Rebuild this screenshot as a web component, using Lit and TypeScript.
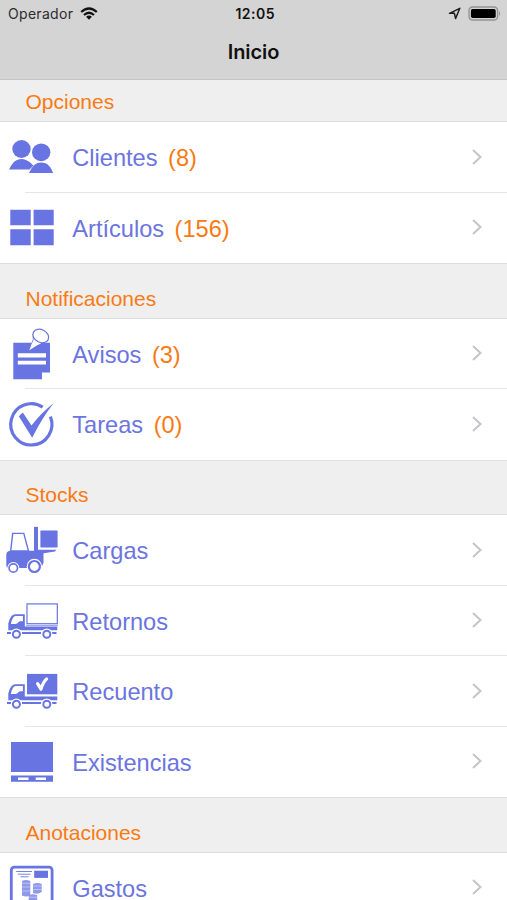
import { LitElement, html, svg, css, nothing } from "lit";
import { customElement, property } from "lit/decorators.js";

const truck = (loaded: boolean) => svg`
  <rect class=${loaded ? "f" : "o"} stroke-width="1.2" x="27" y="17.9" width="30.3" height=${loaded ? 20.4 : 19.8} />
  ${loaded
    ? svg`<path class="cut" stroke-width="3.2" stroke-linecap="round" stroke-linejoin="round" d="M37.6 27.6L41 33.2Q42.8 26.5 46.6 22.9"/>`
    : svg`<path class="o" stroke-width=".7" d="M26 39.4H58"/>`}
  <path class="f" fill-rule="evenodd" d="M8.3 44.8V37.5Q9 33 11.6 30Q13 28.2 15.2 28.2H24.8V40.4H57.3V44.2H8.3Z M10.9 37.9H15.6Q17.2 37.8 18.4 36.2Q19.3 35.2 20.6 35.2H22.9V30H15.5Q14 30 13 31.8Q11.5 34.5 10.9 37.9Z"/>
  <path class="o" stroke-width="1.8" d="M7 47H11 M22 47H41 M52 47H56.5"/>
  ${[16.4, 46.8].map(
    (x) => svg`<circle class="w" cx=${x} cy="48" r="5.6"/><circle class="o" stroke-width="2" cx=${x} cy="48.2" r="3.5"/>`
  )}`;

const icons: Record<string, unknown> = {
  clients: svg`
    <ellipse class="f" cx="21.5" cy="27" rx="9.2" ry="8.9"/>
    <ellipse class="f" cx="41.2" cy="30.3" rx="9.2" ry="8.9"/>
    <path class="f" d="M9 47.6Q12.5 39.7 17 37.9Q21.5 36.3 26 37.9Q30.5 39.7 33.4 43.4L29.6 47.6Z"/>
    <path class="f" d="M29 51Q32.5 43.3 37 41.3Q41.2 39.9 45.5 41.3Q50 43.3 53.2 51Z"/>`,
  items: svg`<path class="f" d="M10.3 16.7H30.7V32.3H10.3Z M33.6 16.7H53.7V32.3H33.6Z M10.3 36.3H30.7V52.3H10.3Z M33.6 36.3H53.7V52.3H33.6Z"/>`,
  notices: svg`
    <path class="f" d="M13.3 23.8H50V53.6H42V60.2H13.3Z"/>
    <path class="w" d="M17.8 34.2H46V38.5H17.8Z M17.8 41.8H46V45.5H17.8Z"/>
    <path class="w" d="M29.3 31.2L32.7 22L33 15L41 24.6L37.2 26.3Z"/>
    <path class="o" stroke-width=".8" d="M31.9 23.8L33.3 20.5L32.9 15"/>
    <ellipse class="p" stroke-width="1.2" cx="40.8" cy="17" rx="8.3" ry="6.3" transform="rotate(28 40.8 17)"/>`,
  tasks: svg`
    <path class="o" stroke-width="3.2" d="M42.7 18.2A20.6 20.6 0 1 0 50.4 27.6"/>
    <path class="f" d="M18.8 27.2L22.8 23.6L31.5 36.6Q41 24 53.6 14.3Q42 29 32.2 48.8Z"/>`,
  loads: svg`
    <path class="f" d="M34 11.8H38V36H34Z"/>
    <rect class="f" x="40.4" y="15.4" width="17.2" height="17.2" rx=".8"/>
    <path class="f" d="M38 34.8H56.3L55 36.4L43.5 38.2V48L41 53H8.5Q6.3 53 6.3 50V39.5Q6.5 36.5 10 35.8H34V34.8Z"/>
    <path class="p" stroke-width="1.4" d="M12.7 18.4H23.8L28.4 35.9H10.7Z"/>
    <circle class="w" cx="13.3" cy="53" r="6"/><circle class="o" stroke-width="1.7" cx="13.3" cy="53" r="4.2"/>
    <circle class="w" cx="34.4" cy="51.5" r="7.7"/><circle class="o" stroke-width="2.2" cx="34.4" cy="51.5" r="5.5"/>`,
  returns: truck(false),
  recount: truck(true),
  stock: svg`
    <path class="f" d="M11 15H53V45H11Z M11 48.5H53V54.7H11Z"/>
    <path class="w" d="M18 50.6H28.5V53H18Z M35.7 50.6H46V53H35.7Z"/>`,
  expenses: svg`
    <rect class="o" stroke-width="2.8" x="11.3" y="14.2" width="40.8" height="58" rx="3"/>
    <path class="f" d="M34.2 17.7H48V24.9H34.2Z"/>
    <path class="o" stroke-width=".9" d="M16.2 18.5H32 M18 21.2H30.5 M20.5 23.8H28.5"/>
    <g class="soft"><path d="M22 28Q26 26 30.3 28V42.5Q26 44.5 22 42.5Z M33 31Q37.5 29 41.7 31V39Q37.5 42 33 40Z M28.7 42.3Q33 40.3 37.2 42.3V49H28.7Z"/></g>
    <path class="cut" stroke-width=".4" d="M22 30.3H30.3 M22 34H30.3 M22 38H30.3 M33 33H41.7 M33 36.5H41.7 M28.7 44.2H37.2"/>`,
};

interface Entry {
  icon: string;
  label: string;
  count?: number;
}

const sections: { title: string; entries: Entry[] }[] = [
  {
    title: "Opciones",
    entries: [
      { icon: "clients", label: "Clientes", count: 8 },
      { icon: "items", label: "Artículos", count: 156 },
    ],
  },
  {
    title: "Notificaciones",
    entries: [
      { icon: "notices", label: "Avisos", count: 3 },
      { icon: "tasks", label: "Tareas", count: 0 },
    ],
  },
  {
    title: "Stocks",
    entries: [
      { icon: "loads", label: "Cargas" },
      { icon: "returns", label: "Retornos" },
      { icon: "recount", label: "Recuento" },
      { icon: "stock", label: "Existencias" },
    ],
  },
  { title: "Anotaciones", entries: [{ icon: "expenses", label: "Gastos" }] },
];

@customElement("menu-row")
class MenuRow extends LitElement {
  @property({ attribute: false }) entry!: Entry;

  static styles = css`
    :host { display: flex; height: 70.56px; background: #fff; color: #6b74df; }
    .icon { width: 60px; height: 70px; flex: none; }
    .f { fill: #6874e2; }
    .o { fill: none; stroke: #6874e2; }
    .p { fill: #fff; stroke: #6874e2; }
    .w { fill: #fff; }
    .cut { fill: none; stroke: #fff; }
    .soft { fill: #8f98e9; }
    .body { flex: 1; display: flex; align-items: center; padding: 2px 24px 0 12.3px; font-size: 23.6px; line-height: 20px; }
    .count { color: #f97a12; margin-left: 10.5px; }
    .arrow { margin-left: auto; width: 12px; height: 18px; margin-bottom: 3px; fill: none; stroke: #c5c5c9; stroke-width: 2; }
  `;

  render() {
    const { icon, label, count } = this.entry;
    return html`
      <svg class="icon" viewBox="0 0 60 70">${icons[icon]}</svg>
      <div class="body">
        <span>${label}</span>
        ${count === undefined ? nothing : html`<span class="count">(${count})</span>`}
        <svg class="arrow" viewBox="0 0 12 18"><path d="M2 2L9.5 9L2 16" /></svg>
      </div>
    `;
  }
}

@customElement("app-root")
class AppRoot extends LitElement {
  static styles = css`
    :host { display: block; height: 900px; overflow: hidden; background: #fff; font-family: "Liberation Sans", Arial, sans-serif; }
    .top { box-sizing: border-box; height: 80px; background: #d4d4d4; border-bottom: 1px solid #c5c5c5; font-family: Inter, sans-serif; color: #111; }
    .status { display: grid; grid-template-columns: 1fr auto 1fr; align-items: center; height: 27px; padding: 0 6px 0 8px; }
    .carrier { display: flex; align-items: center; gap: 7px; font-size: 14px; letter-spacing: .3px; color: #2c2c2c; }
    .time { font-size: 14px; font-weight: 600; letter-spacing: .5px; margin-left: 1.5px; }
    .right { display: flex; justify-content: flex-end; align-items: center; gap: 7px; }
    .title { text-align: center; font-size: 20px; font-weight: 600; line-height: 24px; margin: 13px 0 0; letter-spacing: -.1px; }
    .head { box-sizing: border-box; display: flex; align-items: flex-end; height: 55.45px; padding: 0 25.5px 7px; margin: 0; background: #efefef; border-bottom: 1px solid #dedee0; border-top: 1px solid #dedee0; font-size: 21px; font-weight: 400; line-height: 24px; color: #f97a12; }
    .first { height: 42px; border-top: 0; }
    .line { height: 1px; margin: -1px 0 0 25px; background: #e6e6e8; position: relative; }
  `;

  render() {
    return html`
      <header class="top">
        <div class="status">
          <div class="carrier">
            <span>Operador</span>
            <svg width="18" height="13" viewBox="0 0 18 13" fill="none" stroke="#111" stroke-width="2.3">
              <path d="M1.2 5Q9 -2 16.8 5M4 8Q9 3.6 14 8" />
              <path d="M6.1 9.8Q9 7.4 11.9 9.8L9 12.7Z" fill="#111" stroke="none" />
            </svg>
          </div>
          <div class="time">12:05</div>
          <div class="right">
            <svg width="13" height="13" viewBox="0 0 13 13" fill="none" stroke="#1c1c1c" stroke-width="1.5" stroke-linejoin="round">
              <path d="M11.8 1.3L1.5 6.3H6.4L7.6 11.5Z" />
            </svg>
            <svg width="33" height="15" viewBox="0 0 33 15">
              <rect x="1" y="1" width="28.6" height="13" rx="3.6" fill="none" stroke="#929292" stroke-width="1.3" />
              <rect x="2.9" y="2.9" width="24.8" height="9.2" rx="1.8" fill="#000" />
              <path d="M31 5Q33.2 7.5 31 10Z" fill="#929292" />
            </svg>
          </div>
        </div>
        <h1 class="title">Inicio</h1>
      </header>
      ${sections.map(
        (s, i) => html`
          <h2 class="head ${i === 0 ? "first" : ""}">${s.title}</h2>
          ${s.entries.map(
            (e, j) => html`${j ? html`<div class="line"></div>` : nothing}<menu-row .entry=${e}></menu-row>`
          )}
        `
      )}
    `;
  }
}
